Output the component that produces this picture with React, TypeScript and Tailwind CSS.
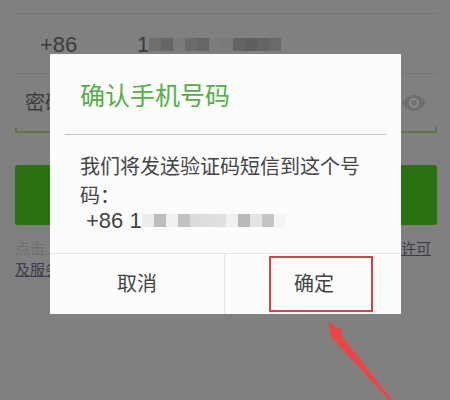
const cjk = "font-['Liberation_Sans','Noto_Sans_CJK_SC',sans-serif]";

function Blurred({ blocks, className }: { blocks: string[]; className?: string }) {
  return (
    <div className={`flex h-[13px] blur-[0.5px] ${className ?? ''}`}>
      {blocks.map((c, i) => (
        <div key={i} className="h-full w-[12px]" style={{ backgroundColor: c }} />
      ))}
    </div>
  );
}

function EyeIcon() {
  return (
    <svg width="26" height="18" viewBox="0 0 26 18" className="blur-[0.5px]">
      <path d="M1 9C5 3 9 1 13 1s8 2 12 8c-4 6-8 8-12 8S5 15 1 9z" fill="#6f6f6f" />
      <circle cx="13" cy="9" r="5" fill="#8c8c8c" />
      <circle cx="13" cy="9" r="3" fill="#737373" />
    </svg>
  );
}

export default function App() {
  return (
    <div className={`relative h-[400px] w-[450px] overflow-hidden bg-[#808080] ${cjk}`}>
      <div className="flex flex-col pl-[15px] pr-[13px] pt-[13px]">
        <div className="h-px bg-[#767676]" />
        <div className="flex h-[60px] items-center border-b border-[#767676] pl-[25px] pt-[1px] text-[22px] text-[#3d3d3d]">
          <span className="w-[97px]">+86</span>
          <span>1</span>
          <Blurred blocks={['#6f6f6f', '#666666', '#7a7a7a', '#6c6c6c', '#666666', '#7c7c7c', '#7a7a7a', '#646464', '#5f5f5f', '#646464', '#6a6a6a']} />
        </div>
        <div className="relative flex h-[59px] items-center justify-between border-b-2 border-b-[#5d7a45] pl-[10px] pr-[10px]">
          <span className="text-[20px] text-[#3d3d3d]">密码</span>
          <EyeIcon />
          <div className="absolute bottom-[-2px] left-0 h-[6px] w-[2px] bg-[#5d7a45]" />
          <div className="absolute bottom-[-2px] right-0 h-[6px] w-[2px] bg-[#5d7a45]" />
        </div>
        <div className="mt-[32px] h-[60px] rounded-[3px] bg-[#2a720f]" />
        <div className="mt-[13px] text-[15px] leading-[21px] text-[#6f6f6f]">
          <div className="flex justify-between pr-[6px]">
            <span>点击上方</span>
            <span className="text-[#3c3c50] underline">许可</span>
          </div>
          <span className="text-[#3c3c50] underline">及服务协议</span>
        </div>
      </div>

      <div className="absolute left-[50px] top-[54px] flex h-[260px] w-[351px] flex-col bg-[#fcfcfc]">
        <div className="mx-[15px] h-[81px] border-b border-[#c4c4c4] pl-[15px] pt-[26px] text-[25px] leading-[32px] text-[#52b044]">
          确认手机号码
        </div>
        <div className="flex-1 pl-[30px] pr-[20px] pt-[18px] text-[20px] leading-[29px] text-[#444444]">
          <p>我们将发送验证码短信到这个号码：</p>
          <div className="flex h-[18px] items-center pl-[6px] text-[22px]">
            <span>+86 1</span>
            <Blurred blocks={['#ececec', '#bdbdbd', '#f0f0f0', '#c2c2c2', '#dcdcdc', '#dedede', '#e0e0e0', '#f0f0f0', '#b9b9b9', '#e4e4e4', '#c4c4c4', '#f5f5f5']} />
          </div>
        </div>
        <div className="flex h-[61px] border-t border-[#e6e6e6] text-[20px] text-[#444444]">
          <div className="flex w-[175px] items-center justify-center border-r border-[#e6e6e6]">取消</div>
          <div className="flex flex-1 items-center pl-[44px] pr-[28px] py-[2px]">
            <div className="flex h-full w-full items-center border-2 border-[#d9413f] pl-[23px]">
              确定
            </div>
          </div>
        </div>
      </div>

      <svg className="absolute left-[320px] top-[315px]" width="80" height="85" viewBox="0 0 80 85">
        <polygon points="8,7 23,16 20,19 72,85 69,85 14,25 11,22" fill="#f04343" />
      </svg>
    </div>
  );
}
